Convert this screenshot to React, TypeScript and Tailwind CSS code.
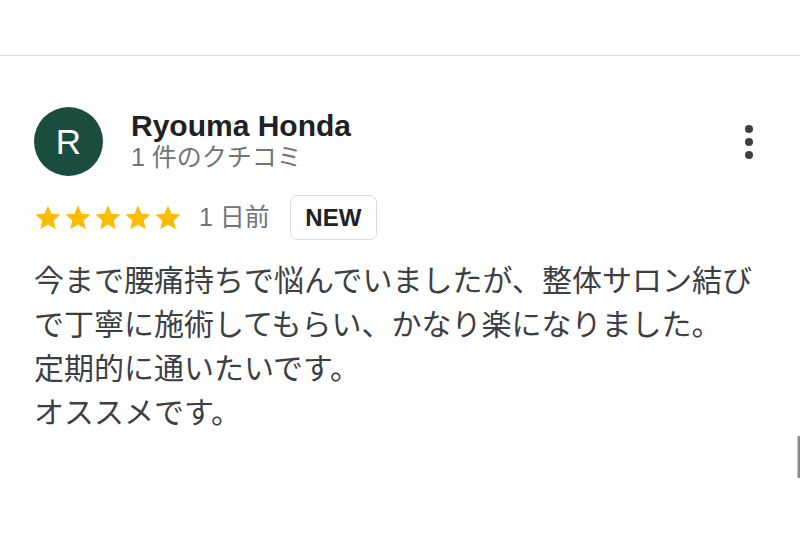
const FONT = "font-['Liberation_Sans','Noto_Sans_CJK_JP',sans-serif]";

function Star() {
  return (
    <svg width="30" height="30" viewBox="0 0 24 24" className="block">
      <path
        d="M12 17.27L18.18 21l-1.64-7.03L22 9.24l-7.19-.61L12 2 9.19 8.63 2 9.24l5.46 4.73L5.82 21z"
        fill="#fbbc04"
      />
    </svg>
  );
}

const LINES = [
  "今まで腰痛持ちで悩んでいましたが、整体サロン結び",
  "で丁寧に施術してもらい、かなり楽になりました。",
  "定期的に通いたいです。",
  "オススメです。",
];

export default function App() {
  return (
    <div className={`relative w-[800px] h-[533px] bg-white overflow-hidden ${FONT}`}>
      {/* top divider */}
      <div className="h-[56px] border-b border-[#dadce0]" />

      <div className="pl-[34px] pr-[47px] pt-[51px]">
        {/* Header */}
        <div className="flex items-center justify-between">
          <div className="flex items-center">
            <div className="w-[69px] h-[69px] rounded-full bg-[#1b4d3e] flex items-center justify-center text-white text-[35px] leading-none">
              R
            </div>
            <div className="ml-[28px] flex flex-col">
              <div className="text-[30px] leading-[32px] font-bold text-[#202124]">Ryouma Honda</div>
              <div className="text-[25px] leading-[31px] text-[#70757a]">1 件のクチコミ</div>
            </div>
          </div>
          <div className="flex flex-col gap-[5px]">
            <div className="w-2 h-2 rounded-full bg-[#3c4043]" />
            <div className="w-2 h-2 rounded-full bg-[#3c4043]" />
            <div className="w-2 h-2 rounded-full bg-[#3c4043]" />
          </div>
        </div>

        {/* Rating row */}
        <div className="mt-[19px] flex items-center">
          <div className="flex -ml-[1px]">
            <Star />
            <Star />
            <Star />
            <Star />
            <Star />
          </div>
          <span className="ml-[16px] text-[25px] leading-none text-[#70757a]">1 日前</span>
          <div className="ml-[20px] w-[87px] h-[45px] rounded-[7px] border-[1.5px] border-[#dadce0] flex items-center justify-center text-[24px] font-bold text-[#202124]">
            NEW
          </div>
        </div>

        {/* Body */}
        <div className="mt-[19px] text-[30px] leading-[44px] text-[#3c4043]">
          {LINES.map((l) => (
            <div key={l} className="whitespace-nowrap">
              {l}
            </div>
          ))}
        </div>
      </div>

      {/* scrollbar */}
      <div className="absolute right-0 top-[436px] w-[3px] h-[42px] bg-[#8a8a8a] border-l border-[#c8c8c8]" />
    </div>
  );
}
